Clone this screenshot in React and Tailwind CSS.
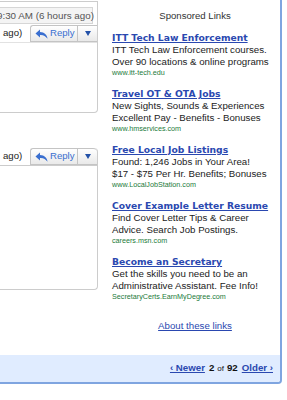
import React from 'react';

const ads = [
  {
    title: 'ITT Tech Law Enforcement',
    lines: ['ITT Tech Law Enforcement courses.', 'Over 90 locations & online programs'],
    url: 'www.itt-tech.edu',
  },
  {
    title: 'Travel OT & OTA Jobs',
    lines: ['New Sights, Sounds & Experiences', 'Excellent Pay - Benefits - Bonuses'],
    url: 'www.hmservices.com',
  },
  {
    title: 'Free Local Job Listings',
    lines: ['Found: 1,246 Jobs in Your Area!', '$17 - $75 Per Hr. Benefits; Bonuses'],
    url: 'www.LocalJobStation.com',
  },
  {
    title: 'Cover Example Letter Resume',
    lines: ['Find Cover Letter Tips & Career', 'Advice. Search Job Postings.'],
    url: 'careers.msn.com',
  },
  {
    title: 'Become an Secretary',
    lines: ['Get the skills you need to be an', 'Administrative Assistant. Fee Info!'],
    url: 'SecretaryCerts.EarnMyDegree.com',
  },
];

const ReplyIcon = () => (
  <svg width="13" height="10" viewBox="0 0 13 10">
    <path d="M5 0.5 L0.5 4.5 L5 8.5 V6 C8.5 5.8 10.5 7 12.5 9.8 C12 5.8 9.5 3.2 5 3 Z" fill="#3a6fd0" />
  </svg>
);

const ReplyButton = ({ top }) => (
  <div
    className={`flex h-[17px] w-[67px] border border-r-0 border-[#c4c4c4] bg-gradient-to-b from-white to-[#e9e9e9] ${top}`}
  >
    <div className="flex w-[47px] items-center gap-[2px] pl-[4px] border-r border-[#c4c4c4]">
      <ReplyIcon />
      <span className="text-[9.6px] text-[#3a6fd0]">Reply</span>
    </div>
    <div className="flex flex-1 items-center justify-center">
      <svg width="6" height="5" viewBox="0 0 6 5">
        <path d="M0 0 H6 L3 5 Z" fill="#2452a8" />
      </svg>
    </div>
  </div>
);

const Row = ({ top }) => (
  <div className="flex items-center justify-between h-[17px]">
    <span className="pl-[3px] text-[9.6px] text-[#222]">ago)</span>
    <ReplyButton top={top} />
  </div>
);

export default function App() {
  return (
    <div
      className="w-[287px] h-[400px] bg-white overflow-hidden"
      style={{ fontFamily: '"Liberation Sans", Arial, sans-serif' }}
    >
      <div className="w-[282px] border-r-2 border-b-2 border-[#7fa5e0] rounded-br-[4px] overflow-hidden">
        <div className="flex h-[355px]">
          <div className="w-[98px] shrink-0 flex flex-col">
            <div className="relative mt-[1px] h-[112px] border-t border-r border-b border-[#cccccc] rounded-br-[4px]">
              <div className="absolute left-[-5px] top-[5px] w-[98px] h-[17px] bg-[#f4f4f4] border border-[#d6d6d6] pl-[1px] text-[9.8px] leading-[15px] text-[#555] whitespace-nowrap">
                9:30 AM (6 hours ago)
              </div>
              <div className="mt-[23px] border-b border-[#e2e2e2]">
                <Row top="rounded-tl-[3px]" />
              </div>
            </div>
            <div className="mt-[35px] h-[142px] border-r border-b border-[#cccccc] rounded-br-[4px] rounded-tr-[4px]">
              <div className="border-b border-[#cccccc]">
                <Row top="rounded-tl-[3px] rounded-tr-[4px]" />
              </div>
            </div>
          </div>

          <div className="ml-[14px] w-[166px] flex flex-col">
            <div className="mt-[10px] h-[12px] text-center text-[9.6px] leading-[12px] text-[#333]">
              Sponsored Links
            </div>
            {ads.map((ad) => (
              <div key={ad.title} className="mt-[10px]">
                <div
                  className="h-[12px] text-[9.2px] leading-[12px] font-bold underline text-[#2a48b0] whitespace-nowrap"
                  style={{ fontFamily: '"DejaVu Sans", Verdana, sans-serif' }}
                >
                  {ad.title}
                </div>
                {ad.lines.map((l) => (
                  <div key={l} className="h-[12px] text-[9.7px] leading-[12px] text-[#222] whitespace-nowrap">
                    {l}
                  </div>
                ))}
                <div className="h-[10px] text-[7.2px] leading-[10px] text-[#1a7a3a] whitespace-nowrap">
                  {ad.url}
                </div>
              </div>
            ))}
            <div className="mt-[18px] text-center text-[9.7px] leading-[12px] text-[#2a48b0] underline">
              About these links
            </div>
          </div>
        </div>

        <div className="h-[27px] bg-[#e0ecff] flex items-center justify-end pr-[7px] text-[9.7px] whitespace-nowrap">
          <span className="font-bold underline text-[#2a48b0]">‹ Newer</span>
          <span className="ml-[4px] font-bold text-[#111]">2</span>
          <span className="ml-[3px] text-[8px] text-[#111]">of</span>
          <span className="ml-[3px] font-bold text-[#111]">92</span>
          <span className="ml-[4px] font-bold underline text-[#2a48b0]">Older ›</span>
        </div>
      </div>
    </div>
  );
}
